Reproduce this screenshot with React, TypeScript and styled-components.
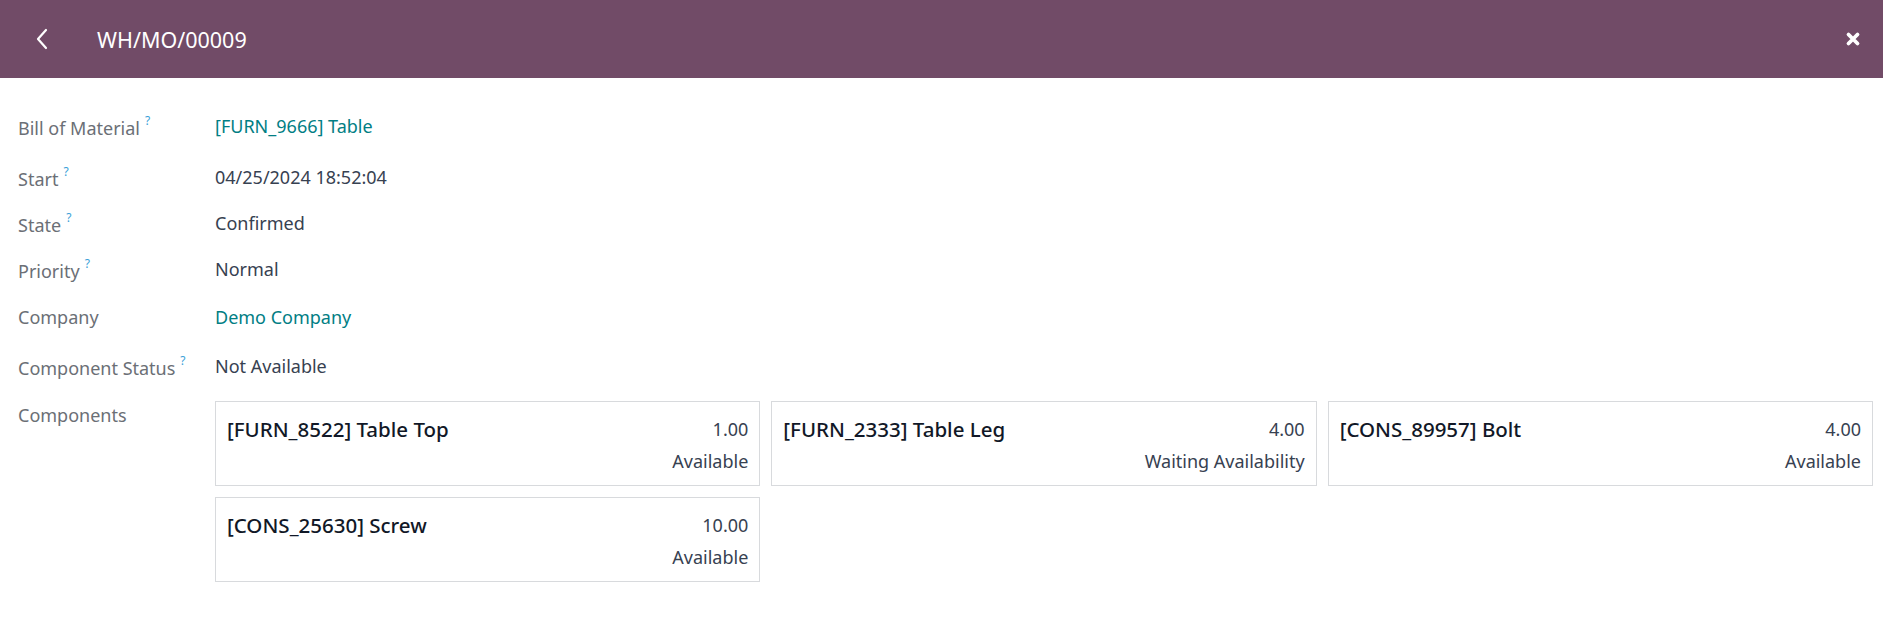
import styled, { createGlobalStyle } from 'styled-components'

const GlobalStyle = createGlobalStyle`
  body {
    margin: 0;
    background: #fff;
    font-family: 'Noto Sans', 'Open Sans', sans-serif;
  }
`

const Header = styled.header`
  height: 78px;
  background: #714b67;
  display: flex;
  align-items: center;
  padding: 0 22px 0 35px;
  color: #fff;
`

const BackButton = styled.button`
  border: 0;
  background: none;
  padding: 0;
  width: 24px;
  display: flex;
  align-items: center;
  color: #fff;
  cursor: pointer;
`

const Title = styled.h1`
  margin: 0 0 0 38px;
  font-size: 21.5px;
  font-weight: 400;
  flex: 1;
`

const CloseButton = styled.button`
  border: 0;
  background: none;
  padding: 0;
  display: flex;
  color: #fff;
  cursor: pointer;
`

const Body = styled.div`
  padding: 25px 10px 20px 18px;
`

const Row = styled.div<{ $space: number; $top?: boolean }>`
  display: grid;
  grid-template-columns: 197px 1fr;
  align-items: ${({ $top }) => ($top ? 'start' : 'center')};
  min-height: 46px;
  margin-top: ${({ $space }) => $space}px;
`

const Label = styled.div<{ $top?: boolean }>`
  font-size: 18px;
  color: #6b6f76;
  padding-top: ${({ $top }) => ($top ? '2px' : '0')};
`

const Help = styled.sup`
  color: #3a9fd8;
  font-size: 12px;
  margin-left: 5px;
  vertical-align: 10px;
`

const Value = styled.div<{ $link?: boolean }>`
  font-size: 18px;
  color: ${({ $link }) => ($link ? '#017e84' : '#374151')};
`

const CardGrid = styled.div`
  display: grid;
  grid-template-columns: repeat(3, 1fr);
  gap: 11px 11px;
`

const Card = styled.div`
  border: 1px solid #d8dadd;
  height: 85px;
  box-sizing: border-box;
  padding: 11px 11px 0 11px;
  display: grid;
  grid-template-columns: 1fr auto;
  grid-template-rows: 32px 32px;
  align-items: center;
`

const CardName = styled.div`
  font-size: 20.5px;
  font-weight: 500;
  color: #111827;
`

const CardQty = styled.div`
  font-size: 18px;
  color: #374151;
  text-align: right;
`

const CardState = styled.div`
  grid-column: 2;
  font-size: 18px;
  color: #374151;
  text-align: right;
`

type Field = {
  label: string
  help?: boolean
  value: string
  link?: boolean
  space: number
}

const fields: Field[] = [
  { label: 'Bill of Material', help: true, value: '[FURN_9666] Table', link: true, space: 0 },
  { label: 'Start', help: true, value: '04/25/2024 18:52:04', space: 5 },
  { label: 'State', help: true, value: 'Confirmed', space: 0 },
  { label: 'Priority', help: true, value: 'Normal', space: 0 },
  { label: 'Company', value: 'Demo Company', link: true, space: 2 },
  { label: 'Component Status', help: true, value: 'Not Available', space: 3 },
]

const components = [
  { name: '[FURN_8522] Table Top', qty: '1.00', state: 'Available' },
  { name: '[FURN_2333] Table Leg', qty: '4.00', state: 'Waiting Availability' },
  { name: '[CONS_89957] Bolt', qty: '4.00', state: 'Available' },
  { name: '[CONS_25630] Screw', qty: '10.00', state: 'Available' },
]

export default function App() {
  return (
    <>
      <GlobalStyle />
      <Header>
        <BackButton aria-label="Back">
          <svg width="14" height="22" viewBox="0 0 14 22" fill="none">
            <path d="M11 2 L3 11 L11 20" stroke="#fff" strokeWidth="2.2" strokeLinecap="round" strokeLinejoin="round" />
          </svg>
        </BackButton>
        <Title>WH/MO/00009</Title>
        <CloseButton aria-label="Close">
          <svg width="16" height="16" viewBox="0 0 16 16">
            <path d="M3.5 3.5 L12.5 12.5 M12.5 3.5 L3.5 12.5" stroke="#fff" strokeWidth="3.8" strokeLinecap="round" />
          </svg>
        </CloseButton>
      </Header>
      <Body>
        {fields.map((f) => (
          <Row key={f.label} $space={f.space}>
            <Label>
              {f.label}
              {f.help && <Help>?</Help>}
            </Label>
            <Value $link={f.link}>{f.value}</Value>
          </Row>
        ))}
        <Row $space={12} $top>
          <Label $top>Components</Label>
          <CardGrid>
            {components.map((c) => (
              <Card key={c.name}>
                <CardName>{c.name}</CardName>
                <CardQty>{c.qty}</CardQty>
                <CardState>{c.state}</CardState>
              </Card>
            ))}
          </CardGrid>
        </Row>
      </Body>
    </>
  )
}
